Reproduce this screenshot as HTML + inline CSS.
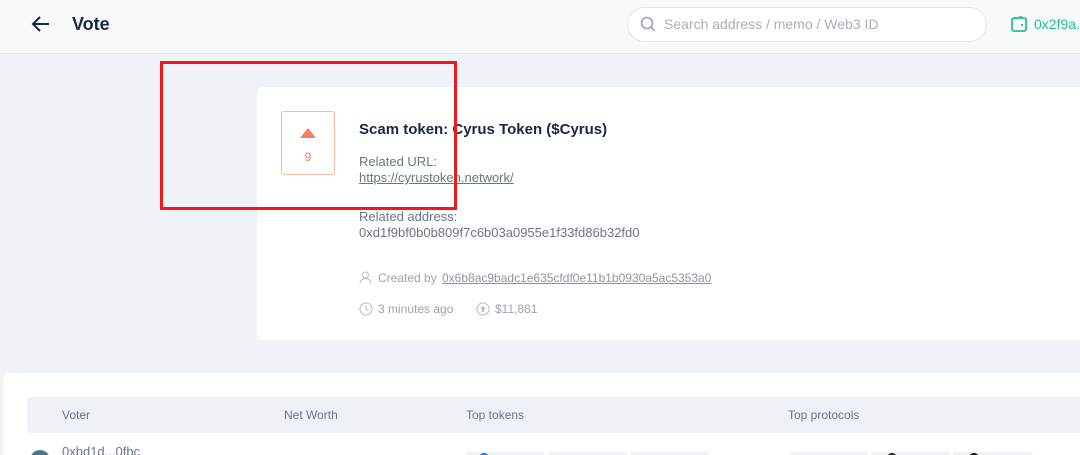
<!DOCTYPE html>
<html><head><style>
*{margin:0;padding:0;box-sizing:border-box}
html,body{width:1080px;height:455px;overflow:hidden}
body{background:#eff2f6;font-family:"Liberation Sans",sans-serif;position:relative}
.hdr{position:absolute;left:0;top:0;width:1080px;height:54px;background:#f8f9fb;border-bottom:1px solid #e3e6eb}
.abs{position:absolute}
.card{position:absolute;left:257px;top:87px;width:830px;height:253px;background:#fff;border-radius:6px}
.lbl{color:#6a7587;font-size:13px}
</style></head><body>
<div class="hdr">
 <svg class="abs" style="left:31px;top:15px" width="20" height="18" viewBox="0 0 20 18"><path d="M18 9H3M9 2L2 9l7 7" fill="none" stroke="#192945" stroke-width="2"/></svg>
 <div class="abs" style="left:72px;top:14px;font-size:18px;color:#192945;font-weight:bold">Vote</div>
 <div class="abs" style="left:627px;top:7px;width:360px;height:35px;background:#fff;border:1px solid #e3e6eb;border-radius:18px"></div>
 <svg class="abs" style="left:640px;top:16px" width="16" height="16" viewBox="0 0 16 16"><circle cx="7" cy="7" r="5.5" fill="none" stroke="#9aa3b2" stroke-width="1.6"/><path d="M11 11l3.5 3.5" stroke="#9aa3b2" stroke-width="1.6"/></svg>
 <div class="abs" style="left:664px;top:16px;font-size:14px;color:#a8b0bd">Search address / memo / Web3 ID</div>
 <svg class="abs" style="left:1010px;top:15px" width="18" height="18" viewBox="0 0 18 18"><rect x="2" y="3" width="14" height="13" rx="2" fill="none" stroke="#27c193" stroke-width="1.8"/><path d="M3 4L12 1.5" stroke="#27c193" stroke-width="1.6"/><rect x="11" y="9" width="2" height="2" fill="#27c193"/></svg>
 <div class="abs" style="left:1034px;top:16px;font-size:14px;color:#27c193">0x2f9a...</div>
</div>
<div class="card">
 <div class="abs" style="left:24px;top:24px;width:54px;height:64px;border:1px solid #f8b9a8;border-radius:3px"></div>
 <div class="abs" style="left:43px;top:41px;width:0;height:0;border-left:8px solid transparent;border-right:8px solid transparent;border-bottom:10px solid #fa7d5c"></div>
 <div class="abs" style="left:24px;top:63px;width:54px;text-align:center;font-size:12px;color:#fa7d5c">9</div>
 <div class="abs" style="left:102px;top:34px;font-size:15px;font-weight:bold;color:#192945">Scam token: Cyrus Token ($Cyrus)</div>
 <div class="abs lbl" style="left:102px;top:67px">Related URL:</div>
 <div class="abs lbl" style="left:102px;top:83px;text-decoration:underline">https://cyrustoken.network/</div>
 <div class="abs lbl" style="left:102px;top:122px">Related address:</div>
 <div class="abs lbl" style="left:102px;top:138px">0xd1f9bf0b0b809f7c6b03a0955e1f33fd86b32fd0</div>
 <svg class="abs" style="left:102px;top:184px" width="13" height="13" viewBox="0 0 13 13"><circle cx="6.5" cy="4" r="3" fill="none" stroke="#b5bcc7"/><path d="M1 12.5c0-3 2.5-5 5.5-5s5.5 2 5.5 5" fill="none" stroke="#b5bcc7"/></svg>
 <div class="abs" style="left:121px;top:184px;font-size:12px;color:#9aa3b2">Created by</div>
 <div class="abs" style="left:185px;top:184px;font-size:12px;color:#8a94a6;text-decoration:underline">0x6b8ac9badc1e635cfdf0e11b1b0930a5ac5353a0</div>
 <svg class="abs" style="left:102px;top:215px" width="14" height="14" viewBox="0 0 14 14"><circle cx="7" cy="7" r="6" fill="none" stroke="#b5bcc7"/><path d="M7 3.5V7l2.5 2" fill="none" stroke="#b5bcc7"/></svg>
 <div class="abs" style="left:121px;top:215px;font-size:12px;color:#9aa3b2">3 minutes ago</div>
 <svg class="abs" style="left:219px;top:215px" width="14" height="14" viewBox="0 0 14 14"><circle cx="7" cy="7" r="6" fill="none" stroke="#b5bcc7"/><path d="M7 4l-3 3h2v3h2V7h2z" fill="#b5bcc7"/></svg>
 <div class="abs" style="left:238px;top:215px;font-size:12px;color:#9aa3b2">$11,881</div>
</div>
<div class="abs" style="left:160px;top:61px;width:297px;height:149px;border:3px solid #f0191d"></div>
<div class="abs" style="left:3px;top:373px;width:1090px;height:82px;background:#fff;border-radius:6px 6px 0 0;overflow:hidden">
 <div class="abs" style="left:24px;top:24px;width:1060px;height:36px;background:#eef1f6;border-radius:3px"></div>
 <div class="abs" style="left:59px;top:35px;font-size:12px;color:#6a7587">Voter</div>
 <div class="abs" style="left:281px;top:35px;font-size:12px;color:#6a7587">Net Worth</div>
 <div class="abs" style="left:463px;top:35px;font-size:12px;color:#6a7587">Top tokens</div>
 <div class="abs" style="left:785px;top:35px;font-size:12px;color:#6a7587">Top protocols</div>
 <div class="abs" style="left:27px;top:77px;width:20px;height:20px;border-radius:50%;background:#4f7590"></div>
 <div class="abs" style="left:59px;top:71px;font-size:13px;color:#6a7587">0xbd1d...0fbc</div>
 <div class="abs" style="left:463px;top:79px;width:79px;height:20px;background:#eef1f6;border-radius:3px"></div>
 <div class="abs" style="left:545px;top:79px;width:79px;height:20px;background:#eef1f6;border-radius:3px"></div>
 <div class="abs" style="left:627px;top:79px;width:79px;height:20px;background:#eef1f6;border-radius:3px"></div>
 <div class="abs" style="left:786px;top:79px;width:79px;height:20px;background:#eef1f6;border-radius:3px"></div>
 <div class="abs" style="left:868px;top:79px;width:79px;height:20px;background:#eef1f6;border-radius:3px"></div>
 <div class="abs" style="left:950px;top:79px;width:79px;height:20px;background:#eef1f6;border-radius:3px"></div>
 <div class="abs" style="left:476px;top:80px;width:10px;height:10px;border-radius:50%;background:#2a6fd6"></div>
 <div class="abs" style="left:884px;top:80px;width:10px;height:10px;border-radius:50%;background:#222"></div>
 <div class="abs" style="left:966px;top:80px;width:10px;height:10px;border-radius:50%;background:#111"></div>
</div>
</body></html>
